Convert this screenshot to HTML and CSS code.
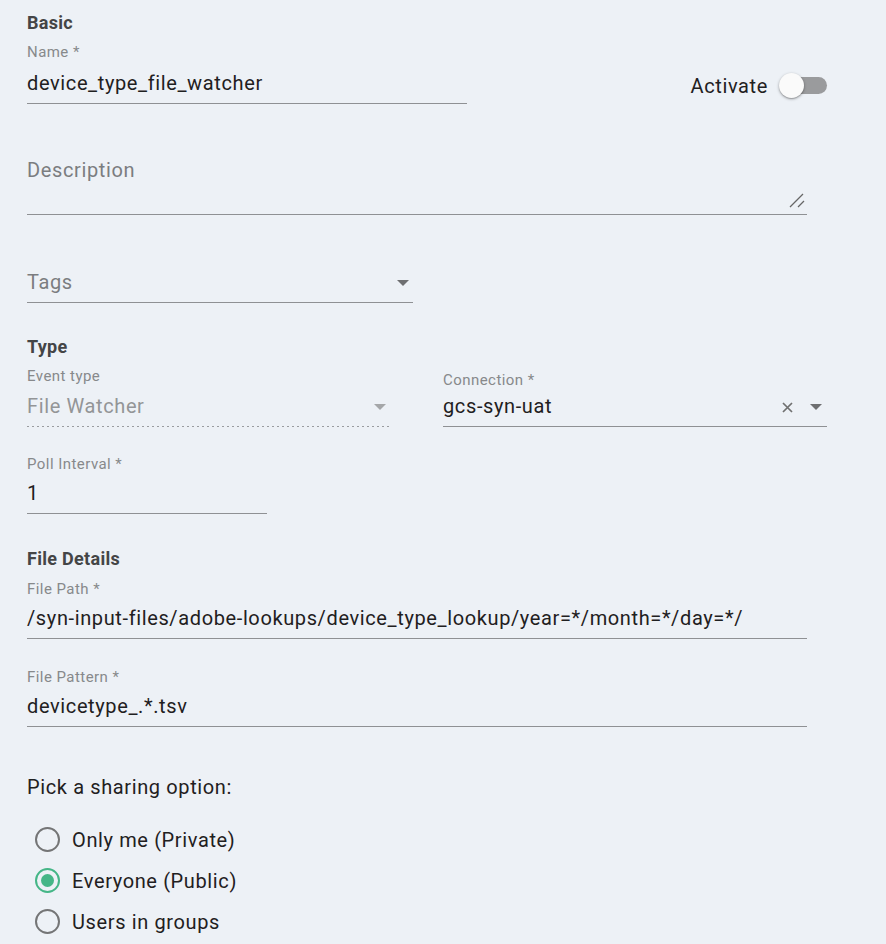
FILE: index.html
```html
<!DOCTYPE html>
<html lang="en">
<head>
<meta charset="utf-8">
<title>Event form</title>
<link rel="stylesheet" href="styles.css">
</head>
<body>
<form class="form">
  <h3 class="section-title">Basic</h3>
  <div class="row-name">
    <div class="field field-name">
      <label class="label">Name *</label>
      <div class="input">device_type_file_watcher</div>
    </div>
    <div class="activate">
      <span class="activate-text">Activate</span>
      <span class="switch"><span class="track"></span><span class="thumb"></span></span>
    </div>
  </div>

  <div class="field field-desc">
    <div class="input input-desc placeholder">Description
      <svg class="resize" width="16" height="15" viewBox="0 0 16 15"><path d="M1 14 L14 1 M9 14 L15 8" stroke="#666" stroke-width="1.3" fill="none"/></svg>
    </div>
  </div>

  <div class="field field-tags">
    <div class="input input-tags placeholder">Tags<span class="caret"></span></div>
  </div>

  <h3 class="section-title title-type">Type</h3>
  <div class="type-row">
    <div class="field field-event">
      <label class="label">Event type</label>
      <div class="input input-disabled">File Watcher<span class="caret caret-light"></span></div>
    </div>
    <div class="field field-conn">
      <label class="label">Connection *</label>
      <div class="input input-conn">gcs-syn-uat
        <span class="adorn">
          <svg class="clear" width="11" height="11" viewBox="0 0 11 11"><path d="M1 1 L10 10 M10 1 L1 10" stroke="#707070" stroke-width="1.7" fill="none"/></svg>
          <span class="caret caret-conn"></span>
        </span>
      </div>
    </div>
  </div>

  <div class="field field-poll">
    <label class="label">Poll Interval *</label>
    <div class="input">1</div>
  </div>

  <h3 class="section-title title-file">File Details</h3>
  <div class="field field-path">
    <label class="label">File Path *</label>
    <div class="input">/syn-input-files/adobe-lookups/device_type_lookup/year=*/month=*/day=*/</div>
  </div>
  <div class="field field-pattern">
    <label class="label">File Pattern *</label>
    <div class="input">devicetype_.*.tsv</div>
  </div>

  <p class="share-title">Pick a sharing option:</p>
  <div class="radios">
    <div class="radio-row"><span class="radio"></span><span>Only me (Private)</span></div>
    <div class="radio-row"><span class="radio radio-on"></span><span>Everyone (Public)</span></div>
    <div class="radio-row"><span class="radio"></span><span>Users in groups</span></div>
  </div>
</form>
</body>
</html>
```
FILE: styles.css
```css
* { box-sizing: border-box; }
body {
  margin: 0;
  background: #edf1f6;
  font-family: Roboto, "Noto Sans", sans-serif;
  color: #1f2021;
}
.form {
  width: 854px;
  padding: 12px 27px 0;
}
.section-title {
  margin: 0;
  font-size: 18px;
  line-height: 22px;
  font-weight: 700;
  letter-spacing: 0.3px;
  color: #444546;
}
.title-type { margin-top: 33px; }
.title-file { margin-top: 34px; }

.field { display: flex; flex-direction: column; }
.label {
  display: block;
  font-size: 15px;
  line-height: 18px;
  letter-spacing: 0.45px;
  color: #87898b;
}
.input {
  position: relative;
  display: flex;
  align-items: center;
  font-size: 20px;
  line-height: 24px;
  letter-spacing: 0.62px;
  padding-bottom: 8px;
  border-bottom: 1px solid #8f9194;
  margin-top: 8px;
  white-space: nowrap;
}
.placeholder { color: #7b7d80; margin-top: 0; }

.row-name {
  width: 800px;
  display: flex;
  justify-content: space-between;
  align-items: flex-start;
  margin-top: 9px;
}
.field-name { width: 440px; }
.field-name .input { margin-top: 10px; }

.activate {
  display: flex;
  align-items: center;
  gap: 11px;
  margin-top: 30px;
  height: 26px;
}
.activate-text { font-size: 20px; line-height: 24px; letter-spacing: 0.62px; color: #1f2021; }
.switch {
  position: relative;
  width: 48px;
  height: 26px;
}
.track {
  position: absolute;
  left: 6px;
  right: 0;
  top: 4px;
  height: 17px;
  border-radius: 9px;
  background: #9a9b9d;
}
.thumb {
  position: absolute;
  left: 0;
  top: 0;
  width: 25px;
  height: 25px;
  border-radius: 50%;
  background: #fafafa;
  box-shadow: 0 1px 3px rgba(0,0,0,0.35), 0 1px 1px rgba(0,0,0,0.14);
}

.field-desc { width: 780px; margin-top: 54px; }
.input-desc { padding-bottom: 32px; }
.resize { position: absolute; right: 2px; bottom: 6px; }

.field-tags { width: 386px; margin-top: 55px; }
.input-tags { padding-bottom: 8px; justify-content: space-between; }

.caret {
  width: 0;
  height: 0;
  border-left: 6px solid transparent;
  border-right: 6px solid transparent;
  border-top: 6px solid #6e6f71;
  margin-right: 4px;
  margin-top: 2px;
}
.caret-light { border-top-color: #a5a7a9; }

.type-row {
  display: flex;
  gap: 53px;
  width: 800px;
  align-items: flex-end;
}
.field-event { width: 363px; }
.field-event .label { margin-top: 9px; }
.field-event .input { margin-top: 9px; }
.input-disabled {
  color: #939597;
  justify-content: space-between;
  border-bottom: none;
  padding-bottom: 9px;
  background-image: linear-gradient(to right, #9a9c9f 40%, transparent 40%);
  background-size: 5px 1px;
  background-repeat: repeat-x;
  background-position: left bottom;
}
.field-conn { width: 384px; }
.field-conn .input { margin-top: 5px; }
.input-conn { justify-content: space-between; }
.adorn { display: flex; align-items: center; gap: 17px; margin-right: 1px; }
.clear { margin-top: 2px; }
.caret-conn { margin-right: 4px; border-top-color: #6e6f71; }

.field-poll { width: 240px; margin-top: 28px; }

.field-path { width: 780px; margin-top: 10px; }
.field-pattern { width: 780px; margin-top: 29px; }

.share-title {
  margin: 48px 0 0;
  font-size: 20px;
  line-height: 24px;
  letter-spacing: 0.62px;
  color: #1f2021;
}
.radios { margin-top: 20px; display: flex; flex-direction: column; }
.radio-row {
  height: 41px;
  display: flex;
  align-items: center;
  gap: 12px;
  padding-left: 8px;
  font-size: 20px;
  line-height: 24px;
  letter-spacing: 0.62px;
}
.radio {
  width: 25px;
  height: 25px;
  border-radius: 50%;
  border: 2px solid #747576;
  display: flex;
  align-items: center;
  justify-content: center;
}
.radio-on { border-color: #45b687; }
.radio-on::after {
  content: "";
  width: 13px;
  height: 13px;
  border-radius: 50%;
  background: #45b687;
}
```
